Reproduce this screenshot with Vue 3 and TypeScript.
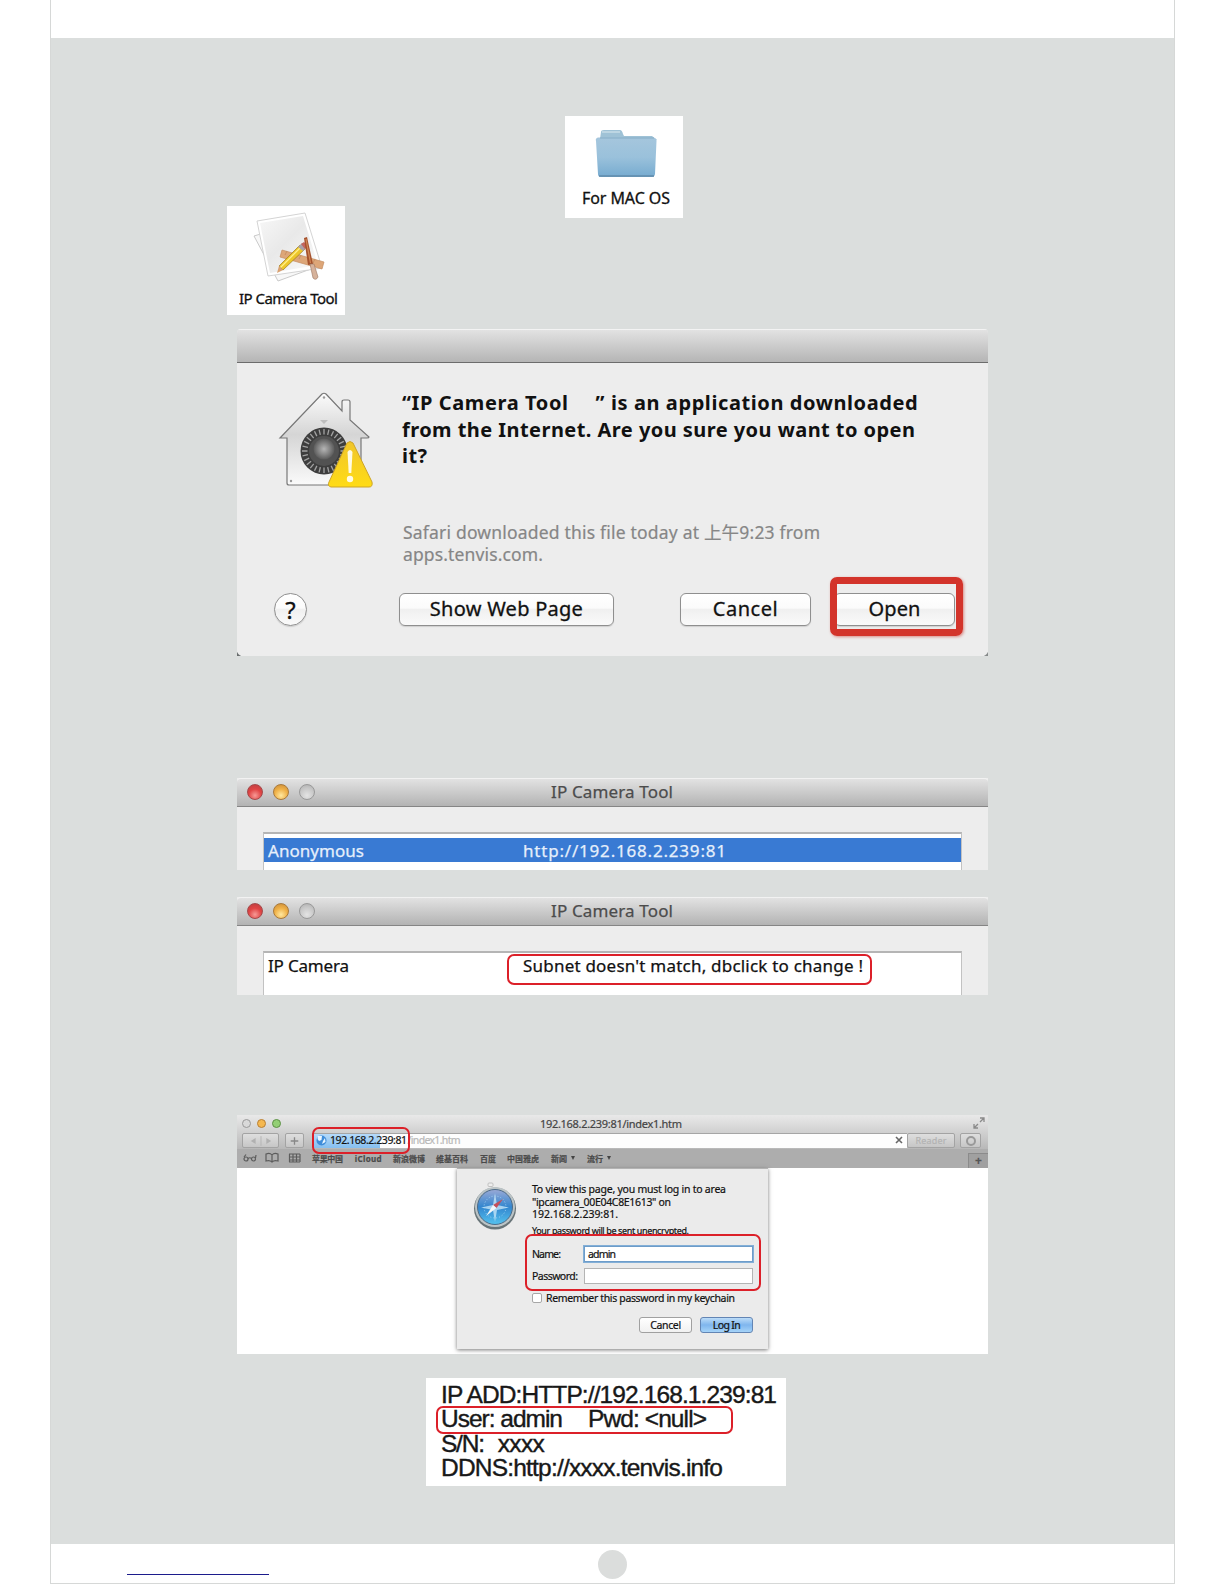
<script setup lang="ts">
import type { Directive } from 'vue';

interface Bookmark {
  label: string;
  width: number;
  gap: number;
  menu?: boolean;
}

const bookmarks: Bookmark[] = [
  { label: '苹果中国', width: 31, gap: 12 },
  { label: 'iCloud', width: 27, gap: 11 },
  { label: '新浪微博', width: 32, gap: 11 },
  { label: '维基百科', width: 32, gap: 12 },
  { label: '百度', width: 16, gap: 11 },
  { label: '中国雅虎', width: 32, gap: 12 },
  { label: '新闻', width: 16, gap: 12, menu: true },
  { label: '流行', width: 16, gap: 0, menu: true },
];

const ticks = Array.from({ length: 28 }, (_, i) => (i * 360) / 28);

// tracks a line of text out (or in) to the given width
const vFit: Directive<HTMLElement, number> = {
  mounted(el, { value }) {
    const chars = (el.textContent ?? '').length;
    const natural = el.getBoundingClientRect().width;
    if (chars > 1) el.style.letterSpacing = `${(value - natural) / (chars - 1)}px`;
  },
};
</script>

<template>
  <div class="page">
    <main class="sheet">
      <div class="panel">
        <div class="files">
          <figure class="file app">
            <svg width="76" height="72" viewBox="0 0 76 72">
              <defs>
                <linearGradient id="paper" x1="0" y1="0" x2="1" y2="1">
                  <stop offset="0" stop-color="#f7f7f7" />
                  <stop offset="0.45" stop-color="#e9e9e9" />
                  <stop offset="1" stop-color="#fbfbfb" />
                </linearGradient>
              </defs>
              <path d="M1 25 L50 10 L66 55 L25 70 Z" fill="#f8f8f8" stroke="#c4c4c4" stroke-width="0.9" />
              <path d="M4 10 L52 2 L69 57 L15 65 Z" fill="#fff" stroke="#cfcfcf" stroke-width="0.9" />
              <path d="M7 12 L50 5 L65 54 L17 62 Z" fill="url(#paper)" />
              <path d="M29 39 L71 51 L69 58 L27 46 Z" fill="#dda678" stroke="#c58c60" stroke-width="0.7" />
              <path d="M32 44 l2 -4 M39 46 l2 -4 M46 48 l2 -4 M60 52 l2 -4" stroke="#b87f55" stroke-width="0.6" />
              <path d="M26 55 L47 34 L52 38 L30 59 Z" fill="#edc62a" stroke="#9c7a20" stroke-width="0.7" />
              <path d="M27.5 56.5 L48.5 35.5" stroke="#fff08a" stroke-width="1.3" />
              <path d="M26 55 L24 62 L30 59 Z" fill="#d9a171" />
              <path d="M45 36 L49 32 L54 36 L50 40 Z" fill="#a9a3a8" />
              <path d="M48 33 l3 -2 l4 4 l-3 3 Z" fill="#c4655e" />
              <path d="M51 27 L54 26 L60 53 L55 54 Z" fill="#a6522d" />
              <path d="M53 28 L57.500 52" stroke="#d18756" stroke-width="1.2" />
              <path d="M57 53 L61 53 L65 66 Q63 70 60 67 Z" fill="#d6b29b" stroke="#98735f" stroke-width="0.6" />
            </svg>
            <figcaption v-fit="99">IP Camera Tool</figcaption>
          </figure>
          <figure class="file folder">
            <svg width="64" height="50" viewBox="0 0 64 50">
              <defs>
                <linearGradient id="folder" x1="0" y1="0" x2="0" y2="1">
                  <stop offset="0" stop-color="#a5c6dd" />
                  <stop offset="0.5" stop-color="#9ac1db" />
                  <stop offset="1" stop-color="#76abd0" />
                </linearGradient>
              </defs>
              <path d="M5 10 L6 3 Q6 1 9 1 H25 Q27 1 28 5 L29 7 H57 L62 11 H1 Z" fill="#9fc2d6" />
              <path d="M7 3 H25" stroke="#bdd6e3" stroke-width="2" />
              <path d="M1 12 Q0 9.500 3 8.500 H58 Q62 9 61.500 12 L60 45 Q59.500 48 57 48 H6 Q3 48 3 45 Z" fill="url(#folder)" />
              <path d="M4 47 H59" stroke="#608baa" stroke-width="1.500" />
              <path d="M5 9 H59" stroke="#85adc6" stroke-width="1" />
            </svg>
            <figcaption v-fit="88">For MAC OS</figcaption>
          </figure>
        </div>

        <section class="alert">
          <div class="alert-bar"></div>
          <div class="alert-body">
            <svg class="house" width="96" height="98" viewBox="0 0 96 98">
              <defs>
                <linearGradient id="wall" x1="0" y1="0" x2="0" y2="1">
                  <stop offset="0" stop-color="#fbfbfb" />
                  <stop offset="0.45" stop-color="#d5d5d5" />
                  <stop offset="1" stop-color="#fafafa" />
                </linearGradient>
                <radialGradient id="knob">
                  <stop offset="0" stop-color="#b5b5b5" />
                  <stop offset="0.55" stop-color="#858585" />
                  <stop offset="1" stop-color="#5b5b5b" />
                </radialGradient>
                <linearGradient id="warn" x1="0" y1="0" x2="0" y2="1">
                  <stop offset="0" stop-color="#f0c52b" />
                  <stop offset="1" stop-color="#ffdc16" />
                </linearGradient>
              </defs>
              <path
                d="M44 2 Q46 0.500 48 2 L64 19 V10 Q64 8 66 8 H70 Q72 8 72 10 V28 L91 45 Q91 46 89 46 H83 V93 H11 Q9 93 9 91 V46 H2 Z"
                fill="url(#wall)"
                stroke="#777"
                stroke-width="1.200"
              />
              <path d="M42 28 h8 l-4 4 Z" fill="#bdbdbd" />
              <circle cx="46" cy="5.500" r="1.200" fill="#999" />
              <circle cx="13" cy="89" r="1.200" fill="#999" />
              <circle cx="46" cy="59" r="23.500" fill="#3d3d3d" />
              <path
                v-for="angle in ticks"
                :key="angle"
                d="M46 37 V42.500"
                stroke="#a3a3a3"
                stroke-width="1.300"
                :transform="`rotate(${angle} 46 59)`"
              />
              <circle cx="46" cy="59" r="15" fill="#525252" />
              <circle cx="46" cy="57" r="10.500" fill="url(#knob)" />
              <path
                d="M69 51 Q72 48 75 51 L94 90 Q95 95 91 95 H53 Q49 94 51 90 Z"
                fill="url(#warn)"
                stroke="#cda528"
                stroke-width="1"
              />
              <path d="M69.500 60 Q72 56 74.500 60 L73.300 81 H70.700 Z" fill="#fffbe5" />
              <circle cx="72" cy="87" r="3.200" fill="#fffbe5" />
            </svg>
            <div class="alert-text">
              <div class="headline">
                <p class="split">
                  <span v-fit="166">“IP Camera Tool</span>
                  <span v-fit="322">” is an application downloaded</span>
                </p>
                <p v-fit="513">from the Internet. Are you sure you want to open</p>
                <p v-fit="25">it?</p>
              </div>
              <div class="detail">
                <p v-fit="417">Safari downloaded this file today at 上午9:23 from</p>
                <p v-fit="140">apps.tenvis.com.</p>
              </div>
            </div>
          </div>
          <div class="alert-actions">
            <button class="help">?</button>
            <button class="push web"><span v-fit="153">Show Web Page</span></button>
            <button class="push cancel"><span v-fit="65">Cancel</span></button>
            <div class="open-wrap">
              <button class="push open"><span v-fit="52">Open</span></button>
              <i class="marker-thick"></i>
            </div>
          </div>
        </section>

        <section class="window first">
          <header class="window-bar">
            <i class="light red"></i><i class="light amber"></i><i class="light off"></i>
            <h2 v-fit="122">IP Camera Tool</h2>
          </header>
          <div class="list">
            <div class="row selected">
              <span v-fit="96">Anonymous</span>
              <span class="address" v-fit="203">http://192.168.2.239:81</span>
            </div>
          </div>
        </section>

        <section class="window second">
          <header class="window-bar">
            <i class="light red"></i><i class="light amber"></i><i class="light off"></i>
            <h2 v-fit="122">IP Camera Tool</h2>
          </header>
          <div class="list">
            <div class="row">
              <span v-fit="81">IP Camera</span>
              <span class="address" v-fit="340">Subnet doesn't match, dbclick to change !</span>
            </div>
            <i class="marker subnet"></i>
          </div>
        </section>

        <section class="browser">
          <header class="browser-title">
            <i class="dot gray"></i><i class="dot amber"></i><i class="dot green"></i>
            <h2 v-fit="142">192.168.2.239:81/index1.htm</h2>
            <svg class="expand" width="12" height="12" viewBox="0 0 12 12">
              <path d="M7 1 H11 V5 M11 1 L7 5 M1 7 V11 H5 M1 11 L5 7" fill="none" stroke="#8a8a8a" stroke-width="1.300" />
            </svg>
          </header>
          <div class="toolbar">
            <span class="tool nav">
              <svg width="36" height="14" viewBox="0 0 36 14">
                <path d="M13 4 L8 7 L13 10 Z M24 4 L29 7 L24 10 Z" fill="#b1b1b1" />
                <path d="M18.500 2 V12" stroke="#b5b5b5" />
              </svg>
            </span>
            <span class="tool plus">
              <svg width="18" height="14" viewBox="0 0 18 14">
                <path d="M5 7 H13 M9 3 V11" stroke="#888" stroke-width="1.400" />
              </svg>
            </span>
            <div class="url">
              <i class="progress"></i>
              <svg width="11" height="11" viewBox="0 0 11 11">
                <circle cx="5.500" cy="5.500" r="5" fill="#3f8dda" />
                <path d="M2 1 H6 L5.500 5 L3 6 L1.500 4 Z M7 6 L9 3 L9.500 7 L6 9 Z" fill="#e8f5ff" />
              </svg>
              <span class="host" v-fit="77">192.168.2.239:81</span>
              <span class="path" v-fit="53">/index1.htm</span>
              <svg class="stop" width="8" height="8" viewBox="0 0 8 8">
                <path d="M1 1 L7 7 M7 1 L1 7" stroke="#666" stroke-width="1.600" />
              </svg>
              <i class="marker host-marker"></i>
            </div>
            <span class="tool reader"><span v-fit="31">Reader</span></span>
            <span class="tool downloads">
              <svg width="12" height="12" viewBox="0 0 12 12">
                <circle cx="6" cy="6" r="4" fill="none" stroke="#999" stroke-width="2" />
              </svg>
            </span>
          </div>
          <nav class="bookmarks">
            <svg width="60" height="12" viewBox="0 0 60 12">
              <g fill="none" stroke="#5c5c5c" stroke-width="1.200">
                <circle cx="3" cy="7" r="2" />
                <circle cx="10.500" cy="7" r="2" />
                <path d="M1 5 L3 2.500 M5 6.500 Q6.700 5 8.500 6.500 M12.500 6 L13 3" />
                <path d="M23 2 Q27 0.500 29 3 Q31 0.500 35 2 V9 Q31 8 29 10 Q27 8 23 9 Z M29 3 V10" />
                <path d="M46 2 H57 M46 5 H57 M46 8 H57 M46 10 H57 M46.500 2 V10 M50 2 V10 M53.500 2 V10 M57 2 V10" />
              </g>
            </svg>
            <span
              v-for="item in bookmarks"
              :key="item.label"
              class="bookmark"
              :style="{ marginRight: `${item.gap}px` }"
            >
              <span v-fit="item.width">{{ item.label }}</span>
              <i v-if="item.menu" class="caret"></i>
            </span>
            <span class="new-tab">+</span>
          </nav>
          <div class="viewport">
            <form class="login">
              <svg class="compass" width="46" height="50" viewBox="0 0 46 50">
                <defs>
                  <linearGradient id="sea" x1="0" y1="0" x2="0" y2="1">
                    <stop offset="0" stop-color="#9aa9d6" />
                    <stop offset="0.5" stop-color="#3386cf" />
                    <stop offset="1" stop-color="#54c2ee" />
                  </linearGradient>
                </defs>
                <rect x="16" y="1" width="5" height="3.500" rx="1" fill="#eee" stroke="#b5b5b5" stroke-width="0.800" />
                <circle cx="23" cy="26.500" r="21" fill="#687478" />
                <circle cx="23" cy="25" r="20" fill="#bcc4c6" />
                <circle cx="23" cy="25" r="17.500" fill="url(#sea)" stroke="#4d6b87" stroke-width="1" />
                <circle cx="23" cy="25" r="11" fill="none" stroke="#9fd2f3" stroke-width="1" stroke-dasharray="1 2" />
                <path d="M23 11 L25 23 L37 25.500 L25 28 L23 40 L21 28 L9 25.500 L21 23 Z" fill="#c3e5f8" opacity="0.800" />
                <path d="M31 17 L24.500 26 L21 23 Z" fill="#c4505c" />
                <path d="M14 34 L21 23 L24.500 26 Z" fill="#f4f8fa" />
              </svg>
              <div class="login-body">
                <p v-fit="194">To view this page, you must log in to area</p>
                <p v-fit="139">"ipcamera_00E04C8E1613" on</p>
                <p v-fit="86">192.168.2.239:81.</p>
                <p class="note" v-fit="157">Your password will be sent unencrypted.</p>
                <div class="field">
                  <label v-fit="29">Name:</label>
                  <div class="input focused"><span v-fit="28">admin</span></div>
                </div>
                <div class="field second-field">
                  <label v-fit="46">Password:</label>
                  <div class="input"></div>
                </div>
                <div class="remember">
                  <i class="checkbox"></i><span v-fit="189">Remember this password in my keychain</span>
                </div>
                <div class="login-actions">
                  <span class="mini"><span v-fit="31">Cancel</span></span>
                  <span class="mini primary"><span v-fit="28">Log In</span></span>
                </div>
              </div>
              <i class="marker credentials"></i>
            </form>
          </div>
        </section>

        <section class="label">
          <p><span v-fit="336">IP ADD:HTTP://192.168.1.239:81</span></p>
          <p><span v-fit="122">User: admin</span><span class="pwd" v-fit="119">Pwd: &lt;null&gt;</span></p>
          <p><span v-fit="44">S/N:</span><span class="serial" v-fit="47">xxxx</span></p>
          <p><span v-fit="282">DDNS:http://xxxx.tenvis.info</span></p>
          <i class="marker user-marker"></i>
        </section>
      </div>
      <footer class="footer">
        <i class="link-line"></i>
        <i class="page-dot"></i>
      </footer>
    </main>
  </div>
</template>

<style>
body {
  background: #fff;
}
</style>

<style scoped>
.page,
.page * {
  box-sizing: border-box;
}

.page {
  width: 1224px;
  height: 1584px;
  overflow: hidden;
  padding-left: 50px;
  font-family: 'Noto Sans', 'Noto Sans CJK SC', sans-serif;
  color: #111;
}

.sheet {
  width: 1125px;
  height: 1584px;
  padding-top: 38px;
  border: 1px solid #d6d8d7;
  border-top: 0;
}

.panel {
  height: 1506px;
  padding: 78px 0 0 186px;
  background: #dbdedd;
}

p,
h2,
figure {
  margin: 0;
  font-weight: normal;
}

p,
h2,
figcaption,
label,
span {
  display: block;
  flex: none;
  width: max-content;
  white-space: pre;
}

button {
  font-family: inherit;
  padding: 0;
}

.marker {
  position: absolute;
  border: 2px solid #dc2029;
  border-radius: 7px;
}

/* Desktop files */
.files {
  display: flex;
  gap: 220px;
  height: 199px;
  margin-left: -10px;
}

.file {
  display: flex;
  flex-direction: column;
  width: 118px;
  background: #fff;
  -webkit-text-stroke: 0.3px;
}

.app {
  height: 109px;
  margin-top: 90px;
  padding: 5px 0 0 12px;
  font-size: 15px;
}

.app svg {
  margin-left: 14px;
}

.app figcaption {
  margin-top: 5px;
  line-height: 20px;
}

.folder {
  height: 102px;
  padding: 13px 0 0 17px;
  font-size: 16px;
}

.folder svg {
  margin-left: 13px;
}

.folder figcaption {
  margin-top: 9px;
  line-height: 20px;
}

/* Download warning */
.alert {
  position: relative;
  width: 751px;
  height: 327px;
  margin-top: 14px;
  border-radius: 4px 4px 0 0;
  background: #ededed;
  overflow: hidden;
}

.alert::before,
.alert::after {
  content: '';
  position: absolute;
  bottom: 0;
  width: 7px;
  height: 7px;
}

.alert::before {
  left: 0;
  background: radial-gradient(circle at 100% 0, transparent 7px, #6a6e6e 8px);
}

.alert::after {
  right: 0;
  background: radial-gradient(circle at 0 0, transparent 7px, #858989 8px);
}

.alert-bar {
  height: 34px;
  border-top: 1px solid #f3f3f3;
  border-bottom: 1px solid #6c6c6c;
  background: linear-gradient(#e2e2e2, #b5b5b5);
}

.alert-body {
  display: flex;
  height: 230px;
  padding: 29px 0 0 41px;
}

.alert-text {
  margin: -2px 0 0 28px;
}

.headline {
  height: 131px;
  font-size: 20px;
  line-height: 26.5px;
}

.headline p,
.headline span {
  font-weight: bold;
}

.split {
  display: flex;
  gap: 27px;
}

.detail {
  font-size: 17.5px;
  line-height: 22px;
  color: #868686;
  padding-left: 1px;
  -webkit-text-stroke: 0.2px;
}

.alert-actions {
  display: flex;
  align-items: center;
  height: 33px;
  padding-left: 37px;
}

.help,
.push {
  display: flex;
  align-items: center;
  justify-content: center;
  flex: none;
  height: 33px;
  border: 1px solid #8f8f8f;
  background: linear-gradient(#fff, #fbfbfb 45%, #f0f0f0 50%, #fafafa);
  box-shadow: 0 1px 1px #cfcfcf;
  color: #111;
  font-size: 20px;
  line-height: 28px;
  -webkit-text-stroke: 0.3px;
}

.push span {
  margin-top: -1px;
}

.help {
  width: 33px;
  border-radius: 50%;
  font-size: 24px;
}

.push {
  border-radius: 6px;
}

.web {
  width: 215px;
  margin-left: 92px;
}

.cancel {
  width: 131px;
  margin-left: 66px;
}

.open-wrap {
  position: relative;
  margin-left: 23px;
}

.open {
  width: 121px;
}

.marker-thick {
  position: absolute;
  top: -16px;
  left: -4px;
  width: 133px;
  height: 59px;
  border: 7px solid #d3342b;
  border-radius: 7px;
  box-shadow: 1px 1px 3px #d98b86;
}

.marker-thick::after {
  content: '';
  position: absolute;
  inset: -1px;
  border-radius: 4px;
  box-shadow: 0 0 0 1px #d3342b;
}

/* Camera tool windows */
.window {
  width: 751px;
  background: #ededed;
  display: flex;
  flex-direction: column;
  align-items: center;
  font-size: 17px;
  -webkit-text-stroke: 0.25px;
}

.first {
  height: 92px;
  margin-top: 122px;
}

.second {
  height: 98px;
  margin-top: 27px;
}

.window-bar {
  display: flex;
  align-items: center;
  width: 751px;
  height: 29px;
  padding-left: 10px;
  padding-bottom: 1px;
  gap: 10px;
  border-top: 1px solid #f2f2f2;
  border-bottom: 1px solid #858585;
  border-radius: 4px 4px 0 0;
  background: linear-gradient(#e2e2e2, #b3b3b3);
}

.window-bar h2 {
  margin-left: 226px;
  font-size: 17px;
  line-height: 26px;
  color: #4c4c4c;
}

.light {
  flex: none;
  width: 16px;
  height: 16px;
  border-radius: 50%;
  border: 1px solid #8b8b8b;
}

.light.red {
  border-color: #a4494a;
  background: radial-gradient(circle at 50% 75%, #f79a96, #e04444 50%, #b93e40);
}

.light.amber {
  border-color: #a9793b;
  background: radial-gradient(circle at 50% 75%, #ffe8a0, #f0b249 50%, #c98a37);
}

.light.off {
  border-color: #999;
  background: radial-gradient(circle at 50% 75%, #e4e4e4, #c6c6c6 60%, #acacac);
}

.list {
  position: relative;
  flex: 1;
  width: 699px;
  margin-top: 25px;
  padding-top: 4px;
  border: 1px solid #c2c2c2;
  border-top: 2px solid #b5b5b5;
  border-bottom: 0;
  background: #fff;
}

.row {
  display: flex;
  height: 24px;
  padding-left: 4px;
  line-height: 26px;
}

.selected {
  background: #397ad3;
  color: #e6effb;
  line-height: 26px;
}

.row .address {
  position: absolute;
  left: 259px;
}

.second .row {
  margin-top: -4px;
}

.subnet {
  left: 243px;
  top: 1px;
  width: 365px;
  height: 31px;
}

/* Safari */
.browser {
  width: 751px;
  height: 239px;
  margin-top: 120px;
  background: linear-gradient(#e9e9e9, #b8b8b8 34px, #adadad);
  font-size: 10.5px;
  -webkit-text-stroke: 0.2px;
}

.browser-title {
  position: relative;
  display: flex;
  align-items: center;
  height: 17px;
  padding-left: 5px;
  padding-bottom: 1px;
  gap: 6px;
}

.browser-title h2 {
  margin-left: 253px;
  font-size: 11px;
  color: #444;
}

.expand {
  margin-left: 285px;
}

.dot {
  flex: none;
  width: 9px;
  height: 9px;
  border: 1px solid #999;
  border-radius: 50%;
  background: #d9d9d9;
}

.dot.amber {
  border-color: #b88036;
  background: #f5b850;
}

.dot.green {
  border-color: #5d9046;
  background: #93cf75;
}

.toolbar {
  display: flex;
  align-items: center;
  height: 17px;
  padding-left: 5px;
}

.tool {
  display: flex;
  align-items: center;
  justify-content: center;
  height: 15px;
  border: 1px solid #a3a3a3;
  border-radius: 2px;
  background: linear-gradient(#dedede, #c6c6c6);
}

.nav {
  width: 37px;
}

.plus {
  width: 19px;
  margin-left: 6px;
}

.url {
  position: relative;
  display: flex;
  align-items: center;
  flex: none;
  width: 595px;
  height: 15px;
  margin-left: 8px;
  padding-left: 4px;
  background: #fdfdfd;
  border-top: 1px solid #a5a5a5;
}

.url svg,
.url span {
  position: relative;
  top: -1px;
}

.progress {
  position: absolute;
  left: 0;
  top: 0;
  width: 68px;
  height: 14px;
  background: linear-gradient(#b5dafa, #86bff0);
}

.host {
  margin-left: 3px;
}

.path {
  margin-left: 1px;
  color: #b9b9b9;
}

.url .stop {
  margin-left: auto;
  margin-right: 4px;
}

.host-marker {
  left: 0;
  top: -7px;
  width: 98px;
  height: 27px;
}

.reader {
  width: 48px;
  color: #b3b3b3;
  font-size: 9px;
}

.downloads {
  width: 21px;
  margin-left: 5px;
}

.bookmarks {
  display: flex;
  align-items: center;
  height: 19px;
  padding-left: 6px;
  padding-bottom: 1px;
  background: #adadad;
  color: #4a4a4a;
  font-size: 8px;
  font-weight: bold;
}

.bookmarks > svg {
  margin-right: 9px;
}

.bookmark {
  display: flex;
  align-items: center;
  gap: 4px;
}

.caret {
  border: 2.5px solid transparent;
  border-top: 4px solid #444;
  border-bottom: 0;
}

.new-tab {
  width: 20px;
  height: 15px;
  margin-left: auto;
  margin-bottom: -1px;
  align-self: flex-end;
  border: 1px solid #8b8b8b;
  border-width: 1px 0 0 1px;
  background: #a0a0a0;
  color: #555;
  font-size: 12px;
  line-height: 13px;
  text-align: center;
}

.viewport {
  height: 186px;
  padding-left: 220px;
  background: #fff;
}

.login {
  position: relative;
  display: flex;
  width: 311px;
  height: 181px;
  background: #ebebeb;
  border-top: 1px solid #b3b3b3;
  box-shadow: 0 1px 4px #777;
}

.compass {
  flex: none;
  margin: 13px 0 0 15px;
}

.login-body {
  margin: 14px 0 0 14px;
  width: 221px;
}

.login-body p {
  line-height: 12.6px;
}

.login-body p.note {
  margin-top: 4px;
  font-size: 9px;
}

.field {
  display: grid;
  grid-template-columns: 52px 169px;
  align-items: center;
  height: 18px;
  margin-top: 8px;
}

.second-field {
  margin-top: 4px;
}

.input {
  width: 169px;
  height: 16px;
  padding-left: 3px;
  border: 1px solid #b4b4b4;
  background: #fff;
  line-height: 14px;
}

.focused {
  border-color: #6d9cc9;
  box-shadow: 0 0 0 1px #83afd7;
}

.remember {
  display: flex;
  align-items: center;
  gap: 4px;
  height: 14px;
  margin-top: 6px;
}

.checkbox {
  width: 10px;
  height: 10px;
  border: 1px solid #a7a7a7;
  border-radius: 2px;
  background: #fff;
}

.login-actions {
  display: flex;
  justify-content: flex-end;
  gap: 8px;
  margin-top: 12px;
}

.mini {
  display: flex;
  align-items: center;
  justify-content: center;
  width: 53px;
  height: 16px;
  border: 1px solid #a0a0a0;
  border-radius: 3px;
  background: linear-gradient(#fff, #f1f1f1);
}

.mini.primary {
  border-color: #6385b4;
  background: linear-gradient(#bcdcf8, #7fb6ee 50%, #a5d3f8);
}

.credentials {
  left: 68px;
  top: 65px;
  width: 236px;
  height: 57px;
}

/* Device label */
.label {
  position: relative;
  width: 360px;
  height: 108px;
  margin: 24px 0 0 189px;
  padding: 5px 0 0 15px;
  background: #fff;
  font-family: 'Liberation Sans', sans-serif;
  font-size: 24.5px;
  line-height: 24.4px;
  color: #181818;
  -webkit-text-stroke: 0.4px;
}

.label p {
  display: flex;
}

.pwd {
  margin-left: 26px;
}

.serial {
  margin-left: 14px;
}

.user-marker {
  left: 10px;
  top: 28px;
  width: 297px;
  height: 28px;
}

/* Footer */
.footer {
  position: relative;
  height: 39px;
}

.link-line {
  position: absolute;
  left: 76px;
  top: 30px;
  width: 142px;
  height: 1px;
  background: #1c1c8c;
}

.page-dot {
  display: block;
  width: 29px;
  height: 29px;
  margin: 0 auto;
  border-radius: 50%;
  background: #dbdddc;
  transform: translateY(6px);
}
</style>
